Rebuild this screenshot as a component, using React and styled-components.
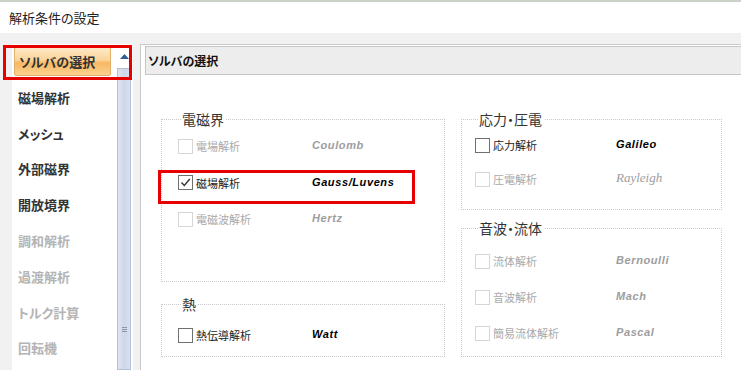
import styled, { createGlobalStyle } from 'styled-components';

const GlobalStyle = createGlobalStyle`
  html, body { margin: 0; padding: 0; }
  body {
    width: 741px;
    height: 370px;
    overflow: hidden;
    background: #fff;
    font-family: "Noto Sans CJK JP", "Liberation Sans", sans-serif;
    font-feature-settings: "palt";
  }
`;

const Window = styled.div`
  position: relative;
  width: 741px;
  height: 370px;
  box-sizing: border-box;
  border-top: 2px solid #cdd2c8;
  display: flex;
  flex-direction: column;
  overflow: hidden;
`;

const TitleBar = styled.div`
  flex: none;
  height: 31px;
  display: flex;
  align-items: center;
  padding-left: 9px;
  font-size: 13px;
  color: #222;
`;

const Body = styled.div`
  flex: 1;
  display: flex;
  background: #f1f1f1;
  padding-top: 11px;
  min-height: 0;
`;

const LeftPane = styled.div`
  margin-left: 12px;
  width: 121px;
  background: #fff;
  display: flex;
`;

const List = styled.div`
  width: 100px;
  padding: 3px 0 0 2px;
  display: flex;
  flex-direction: column;
`;

const Item = styled.div`
  flex: none;
  height: 35.8px;
  box-sizing: border-box;
`;

const ItemLabel = styled.div`
  height: 29px;
  width: 97px;
  box-sizing: border-box;
  display: flex;
  align-items: center;
  padding-left: 4px;
  font-size: 13px;
  font-weight: bold;
  color: ${(p) => (p.$disabled ? '#b4b4b4' : '#333')};
  border-radius: 2px;
  ${(p) =>
    p.$selected &&
    `
    background: linear-gradient(#fde9c6 0%, #fbd49a 45%, #f8b863 55%, #fbd08f 100%);
    border: 1px solid #e3b06a;
  `}
`;

const ScrollBar = styled.div`
  width: 17px;
  margin-left: 2px;
  display: flex;
  flex-direction: column;
`;

const ArrowButton = styled.div`
  height: 24px;
  display: flex;
  align-items: center;
  justify-content: center;
`;

const Thumb = styled.div`
  flex: 1;
  margin: 0 2px 0 1px;
  border: 1px solid #b4c0d6;
  background: linear-gradient(90deg, #dfe6f2, #cdd7e9 50%, #d9e0ee);
  display: flex;
  align-items: flex-start;
  justify-content: center;
  padding-top: 258px;
`;

const RightPane = styled.div`
  flex: 1;
  margin-left: 7px;
  background: #fff;
  border-left: 1px solid #c9c9c9;
  border-top: 1px solid #c9c9c9;
  padding: 1px 0 0 4px;
  display: flex;
  flex-direction: column;
`;

const Header = styled.div`
  height: 29px;
  box-sizing: border-box;
  background: #ededed;
  border: 1px solid #c6c6c6;
  border-right: none;
  display: flex;
  align-items: center;
  padding-left: 2px;
  font-size: 12px;
  font-weight: bold;
  color: #111;
`;

const Content = styled.div`
  display: flex;
  gap: 16px;
  padding: 37px 0 0 16px;
`;

const Column = styled.div`
  width: ${(p) => p.$w}px;
  display: flex;
  flex-direction: column;
  gap: ${(p) => p.$gap}px;
`;

const Group = styled.fieldset`
  margin: 0;
  padding: ${(p) => p.$top}px 0 0 ${(p) => p.$left}px;
  border: 1px dotted #c8c8c8;
  height: ${(p) => p.$h}px;
  box-sizing: border-box;
  min-width: 0;
`;

const Legend = styled.legend`
  margin-left: 3px;
  padding: 0 2px 0 1px;
  font-size: 14px;
  line-height: 14px;
  color: #333;
`;

const Row = styled.div`
  height: ${(p) => p.$h}px;
  display: flex;
  align-items: center;
`;

const Box = styled.span`
  flex: none;
  width: 15px;
  height: 15px;
  box-sizing: border-box;
  border: 1px solid ${(p) => (p.$disabled ? '#d6d6d6' : '#707070')};
  background: #fff;
  display: flex;
  align-items: center;
  justify-content: center;
`;

const Label = styled.span`
  width: ${(p) => p.$w}px;
  margin-left: 3px;
  font-size: 11px;
  color: ${(p) => (p.$disabled ? '#a9a9a9' : '#222')};
`;

const Name = styled.span`
  font-family: ${(p) => (p.$serif ? '"Liberation Serif", serif' : '"Liberation Sans", sans-serif')};
  font-size: ${(p) => (p.$serif ? 13 : 11)}px;
  font-style: italic;
  font-weight: ${(p) => (p.$serif ? 'normal' : 'bold')};
  letter-spacing: ${(p) => (p.$serif ? 0 : 0.6)}px;
  color: ${(p) => (p.$disabled ? '#9d9d9d' : '#000')};
  margin-top: -2px;
`;

const Highlight = styled.div`
  position: absolute;
  left: ${(p) => p.$x}px;
  top: ${(p) => p.$y}px;
  width: ${(p) => p.$w}px;
  height: ${(p) => p.$h}px;
  box-sizing: border-box;
  border: 3px solid #e60000;
  pointer-events: none;
`;

const menu = [
  { t: 'ソルバの選択', selected: true },
  { t: '磁場解析' },
  { t: 'メッシュ' },
  { t: '外部磁界' },
  { t: '開放境界' },
  { t: '調和解析', disabled: true },
  { t: '過渡解析', disabled: true },
  { t: 'トルク計算', disabled: true },
  { t: '回転機', disabled: true },
];

const leftGroups = [
  {
    title: '電磁界',
    h: 170,
    top: 2,
    rowH: 36.5,
    rows: [
      { l: '電場解析', n: 'Coulomb', disabled: true },
      { l: '磁場解析', n: 'Gauss/Luvens', checked: true },
      { l: '電磁波解析', n: 'Hertz', disabled: true },
    ],
  },
  {
    title: '熱',
    h: 60,
    top: 6,
    rowH: 36,
    rows: [{ l: '熱伝導解析', n: 'Watt' }],
  },
];

const rightGroups = [
  {
    title: '応力・圧電',
    h: 98,
    top: 2,
    rowH: 34,
    rows: [
      { l: '応力解析', n: 'Galileo' },
      { l: '圧電解析', n: 'Rayleigh', disabled: true, serif: true },
    ],
  },
  {
    title: '音波・流体',
    h: 136,
    top: 8,
    rowH: 36,
    rows: [
      { l: '流体解析', n: 'Bernoulli', disabled: true },
      { l: '音波解析', n: 'Mach', disabled: true },
      { l: '簡易流体解析', n: 'Pascal', disabled: true },
    ],
  },
];

const Check = () => (
  <svg width="11" height="11" viewBox="0 0 11 11">
    <polyline points="1.5,5.5 4.3,8.5 9.8,2" fill="none" stroke="#333" strokeWidth="1.4" />
  </svg>
);

const GroupBox = ({ g, left, labelW }) => (
  <Group $h={g.h} $top={g.top} $left={left}>
    <Legend>{g.title}</Legend>
    {g.rows.map((r) => (
      <Row key={r.l} $h={g.rowH}>
        <Box $disabled={r.disabled}>{r.checked && <Check />}</Box>
        <Label $w={labelW} $disabled={r.disabled}>{r.l}</Label>
        <Name $disabled={r.disabled} $serif={r.serif}>{r.n}</Name>
      </Row>
    ))}
  </Group>
);

export default function App() {
  return (
    <>
      <GlobalStyle />
      <Window>
        <TitleBar>解析条件の設定</TitleBar>
        <Body>
          <LeftPane>
            <List>
              {menu.map((m) => (
                <Item key={m.t}>
                  <ItemLabel $selected={m.selected} $disabled={m.disabled}>{m.t}</ItemLabel>
                </Item>
              ))}
            </List>
            <ScrollBar>
              <ArrowButton>
                <svg width="9" height="5" viewBox="0 0 9 5">
                  <polygon points="0,5 4.5,0 9,5" fill="#2f5c9c" />
                </svg>
              </ArrowButton>
              <Thumb>
                <svg width="5" height="5" viewBox="0 0 5 5">
                  <rect x="0" y="0" width="5" height="1" fill="#8a95a8" />
                  <rect x="0" y="2" width="5" height="1" fill="#8a95a8" />
                  <rect x="0" y="4" width="5" height="1" fill="#8a95a8" />
                </svg>
              </Thumb>
            </ScrollBar>
          </LeftPane>
          <RightPane>
            <Header>ソルバの選択</Header>
            <Content>
              <Column $w={284} $gap={15}>
                {leftGroups.map((g) => (
                  <GroupBox key={g.title} g={g} left={16} labelW={116} />
                ))}
              </Column>
              <Column $w={261} $gap={11}>
                {rightGroups.map((g) => (
                  <GroupBox key={g.title} g={g} left={13} labelW={123} />
                ))}
              </Column>
            </Content>
          </RightPane>
        </Body>
        <Highlight $x={3} $y={43} $w={129} $h={35} />
        <Highlight $x={158} $y={168} $w={257} $h={34} />
      </Window>
    </>
  );
}
